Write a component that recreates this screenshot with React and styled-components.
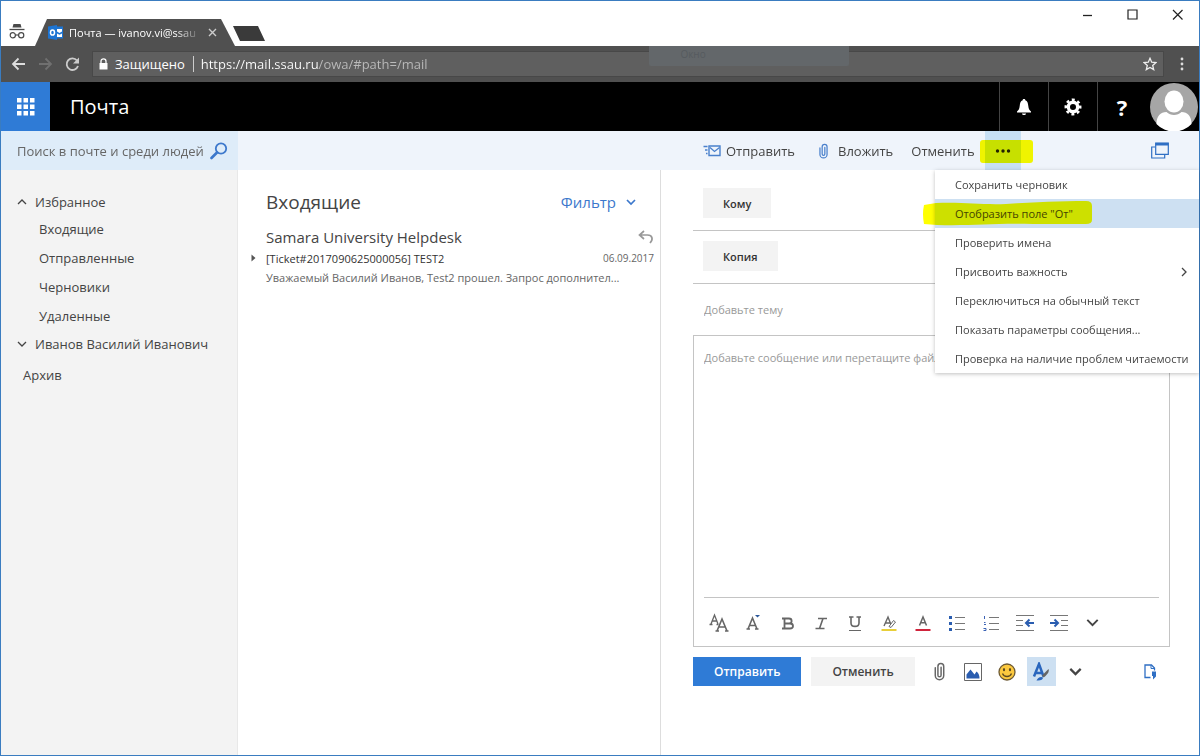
import React, { useState } from "react";
import styled, { createGlobalStyle, css } from "styled-components";

const folders = ["Входящие", "Отправленные", "Черновики", "Удаленные"];

const menuItems = [
  { label: "Сохранить черновик" },
  { label: 'Отобразить поле "От"', marked: true },
  { label: "Проверить имена" },
  { label: "Присвоить важность", submenu: true },
  { label: "Переключиться на обычный текст" },
  { label: "Показать параметры сообщения..." },
  { label: "Проверка на наличие проблем читаемости" },
];

const Icon = ({ w = 16, h = 16, box, children, ...rest }) => (
  <svg width={w} height={h} viewBox={box || `0 0 ${w} ${h}`} fill="none" aria-hidden="true" {...rest}>
    {children}
  </svg>
);

const Chevron = ({ dir = "down", size = 10, width = 1.3 }) => {
  const paths = { down: "M1 3l4 4 4-4", up: "M1 7l4-4 4 4", right: "M3 1l4 4-4 4" };
  return (
    <Icon w={size} h={size} box="0 0 10 10">
      <path d={paths[dir]} stroke="currentColor" strokeWidth={width} />
    </Icon>
  );
};

const Clip = ({ color, w, h }) => (
  <Icon w={w} h={h} box="0 0 10 18">
    <path
      d="M6.500 5v7.500a1.500 1.500 0 0 1-3 0V4.200a2.700 2.700 0 0 1 5.500 0v8.600a4 4 0 0 1-8 0V5.500"
      stroke={color}
      strokeWidth="1.400"
      strokeLinecap="round"
    />
  </Icon>
);

const formatTools = [
  {
    name: "Шрифт",
    icon: (
      <Icon w={20} h={20}>
        <path d="M2 11L5.5 2 9 11M3.5 8h4M0.5 11.5h3M7.5 11.5h2" stroke="#666" strokeWidth="1.3" />
        <path d="M8 18L13 6l5 12M9.8 14h6.500M6.500 18h3.500M16 18h3.500" stroke="#666" strokeWidth="1.6" />
      </Icon>
    ),
  },
  {
    name: "Размер шрифта",
    icon: (
      <Icon w={20} h={20}>
        <path d="M5 16L9.500 5 14 16M6.500 12.500h6M3.500 16h3.500M12 16h3.500" stroke="#666" strokeWidth="1.6" />
        <path d="M12 2h5l-2.500 2.500z" fill="#2b579a" />
      </Icon>
    ),
  },
  {
    name: "Полужирный",
    icon: (
      <Icon w={20} h={20}>
        <path
          d="M5 5.500h7c3.500 0 3.500 5 0 5H8M5 15.500h8c4 0 4-5 0-5M7.500 5.500v10"
          stroke="#666"
          strokeWidth="1.8"
        />
      </Icon>
    ),
  },
  {
    name: "Курсив",
    icon: (
      <Icon w={20} h={20}>
        <path d="M7 5.500h9M4.500 15.500h9M12 5.500l-3.500 10" stroke="#666" strokeWidth="1.6" />
      </Icon>
    ),
  },
  {
    name: "Подчеркнутый",
    icon: (
      <Icon w={20} h={20}>
        <path d="M4 4h4.500M11.500 4H16M6 4v6c0 4.500 8 4.500 8 0V4" stroke="#666" strokeWidth="1.6" />
        <path d="M4 17.500h12" stroke="#666" />
      </Icon>
    ),
  },
  {
    name: "Выделение",
    icon: (
      <Icon w={20} h={20}>
        <path d="M5 13L9 4l3.500 9M6.200 10h5.500" stroke="#666" strokeWidth="1.4" />
        <path d="M10 13.500l4.500-6 2 1.500-4.500 5.500z" fill="#fff" stroke="#666" />
        <path d="M2.500 17h15" stroke="#e8cf3a" strokeWidth="2" />
      </Icon>
    ),
  },
  {
    name: "Цвет шрифта",
    icon: (
      <Icon w={20} h={20}>
        <path d="M6.500 12.500L10 4l3.500 8.500M7.700 9.700h4.600" stroke="#666" strokeWidth="1.5" />
        <path d="M2.500 17h15" stroke="#d0243c" strokeWidth="2" />
      </Icon>
    ),
  },
  {
    name: "Маркеры",
    icon: (
      <Icon w={20} h={20}>
        <path d="M2 3h3v3H2zM2 9h3v3H2zM2 15h3v3H2z" fill="#2a5db0" />
        <path d="M8 4.500h10M8 10.500h10M8 16.500h10" stroke="#777" />
      </Icon>
    ),
  },
  {
    name: "Нумерация",
    icon: (
      <Icon w={20} h={20}>
        <path d="M3.500 3v3M3 3.500h1M3 9.500h1.500M3 11.500h2M2.500 15.500h2.500v2H2.500" stroke="#3b62b5" />
        <path d="M8 4.500h10M8 10.500h10M8 16.500h10" stroke="#777" />
      </Icon>
    ),
  },
  {
    name: "Уменьшить отступ",
    icon: (
      <Icon w={20} h={20}>
        <path d="M1 2.500h18M1 7.500h7M1 12.500h7M1 17.500h18" stroke="#777" />
        <path d="M19 10h-8M14.500 6.500L11 10l3.500 3.500" stroke="#2a5db0" strokeWidth="2" />
      </Icon>
    ),
  },
  {
    name: "Увеличить отступ",
    icon: (
      <Icon w={20} h={20}>
        <path d="M1 2.500h18M12 7.500h7M12 12.500h7M1 17.500h18" stroke="#777" />
        <path d="M1 10h8M5.500 6.500L9 10l-3.500 3.500" stroke="#2a5db0" strokeWidth="2" />
      </Icon>
    ),
  },
  { name: "Еще форматирование", icon: <Chevron size={13} width={1.5} /> },
];

const attachTools = [
  { name: "Вложить файл", icon: <Clip color="#666" w={11} h={19} /> },
  {
    name: "Вставить рисунок",
    icon: (
      <Icon w={18} h={18}>
        <path d="M0.500 0.500h17v17H0.500z" stroke="#666" fill="#fff" />
        <path d="M2.500 15.500v-4l4-5 4 5 2-3c2.500 2 3 4 3 7z" fill="#2a5db0" />
      </Icon>
    ),
  },
  {
    name: "Смайлик",
    icon: (
      <Icon w={18} h={18}>
        <circle cx="9" cy="9" r="8" fill="#fcc93f" stroke="#6d5a34" strokeWidth="1.300" />
        <ellipse cx="6" cy="6.700" rx="1.100" ry="1.600" fill="#5d4a20" />
        <ellipse cx="12" cy="6.700" rx="1.100" ry="1.600" fill="#5d4a20" />
        <path d="M4.500 10.500c1.500 4 7.500 4 9 0" stroke="#5d4a20" strokeWidth="1.300" />
      </Icon>
    ),
  },
  {
    name: "Форматирование",
    active: true,
    icon: (
      <Icon w={20} h={20}>
        <path d="M3 14.500L8 2l4.500 12.500M4.500 11h7" stroke="#2a66bd" strokeWidth="2.500" />
        <path d="M11 13.500L17.500 7c1.500 2.500-2 6.500-5 8.500z" fill="#666" />
        <path d="M5.500 18.500c1-2.500 4-4.500 6.500-3 0 2-2.500 3.500-6.500 3z" fill="#2a66bd" />
      </Icon>
    ),
  },
  { name: "Дополнительно", icon: <Chevron size={13} width={1.700} /> },
];

const App = () => {
  const [subject, setSubject] = useState("");
  const [message, setMessage] = useState("");

  return (
    <Window>
      <GlobalStyle />
      <TabStrip>
        <Incognito>
          <Icon w={16} h={17}>
            <path d="M4.500 1h7l1 3.500h-9z" fill="#4a4a4a" />
            <path d="M0.500 6.500h15" stroke="#4a4a4a" strokeWidth="1.300" />
            <circle cx="3.800" cy="12.300" r="2.600" stroke="#4a4a4a" strokeWidth="1.200" />
            <circle cx="12.200" cy="12.300" r="2.600" stroke="#4a4a4a" strokeWidth="1.200" />
            <path d="M6.400 12h3.200" stroke="#4a4a4a" strokeWidth="1.200" />
          </Icon>
        </Incognito>
        <Tab>
          <Icon w={15} h={15}>
            <path d="M0 1.500L9 0v15L0 13.500z" fill="#1d74d2" />
            <path d="M9 1.500h6v12H9z" fill="#1d74d2" />
            <ellipse cx="4.500" cy="7.500" rx="2" ry="2.600" stroke="#fff" strokeWidth="1.500" />
            <path d="M9 4h5v2.500L11.500 8 9 6.500zM9 8.500l2.500 1.300L14 8.500v3.500H9z" fill="#fff" />
          </Icon>
          <TabTitle>Почта — ivanov.vi@ssau</TabTitle>
          <PlainButton aria-label="Закрыть вкладку">
            <Icon w={9} h={9}>
              <path d="M1 1l7 7M8 1L1 8" stroke="#ccc" strokeWidth="1.400" />
            </Icon>
          </PlainButton>
        </Tab>
        <NewTab aria-label="Новая вкладка" />
        <WindowButtons>
          <PlainButton aria-label="Свернуть">
            <Icon w={11} h={11}><path d="M1 6.500h9" stroke="#222" strokeWidth="1.300" /></Icon>
          </PlainButton>
          <PlainButton aria-label="Развернуть">
            <Icon w={11} h={11}><path d="M1 1h9v9H1z" stroke="#222" strokeWidth="1.200" /></Icon>
          </PlainButton>
          <PlainButton aria-label="Закрыть">
            <Icon w={11} h={11}><path d="M1 1l9.500 9.500M10.500 1L1 10.500" stroke="#222" strokeWidth="1.200" /></Icon>
          </PlainButton>
        </WindowButtons>
      </TabStrip>

      <AddressRow>
        <PlainButton aria-label="Назад">
          <Icon w={15} h={14}><path d="M14 7H2M7.500 1.500L2 7l5.500 5.500" stroke="#ddd" strokeWidth="1.800" /></Icon>
        </PlainButton>
        <PlainButton aria-label="Вперед">
          <Icon w={15} h={14}><path d="M1 7h12M7.500 1.500L13 7l-5.500 5.500" stroke="#707070" strokeWidth="1.800" /></Icon>
        </PlainButton>
        <PlainButton aria-label="Обновить">
          <Icon w={15} h={15}>
            <path d="M12 3.500A5.800 5.800 0 1 0 13 9" stroke="#ccc" strokeWidth="1.800" />
            <path d="M14 0.500V6.500H8z" fill="#ccc" />
          </Icon>
        </PlainButton>
        <AddressBar>
          <Icon w={9} h={12}>
            <path d="M0.500 5h8v6.500h-8z" fill="#fff" />
            <path d="M2 5.500V3.300a2.500 2.500 0 0 1 5 0V5.500" stroke="#fff" strokeWidth="1.300" />
          </Icon>
          <Secure>Защищено</Secure>
          <Address aria-label="Адрес" defaultValue="https://mail.ssau.ru/owa/#path=/mail" />
          <Ghost>Окно</Ghost>
          <PlainButton aria-label="В закладки">
            <Icon w={14} h={14}>
              <path d="M7 1.300l1.700 3.900 4.200.4-3.200 2.800 1 4.200L7 10.400l-3.700 2.200 1-4.200L1.100 5.600l4.200-.4z" stroke="#eee" strokeWidth="1.300" />
            </Icon>
          </PlainButton>
        </AddressBar>
        <PlainButton aria-label="Меню">
          <Icon w={4} h={14}>
            <circle cx="2" cy="2" r="1.400" fill="#ddd" />
            <circle cx="2" cy="7" r="1.400" fill="#ddd" />
            <circle cx="2" cy="12" r="1.400" fill="#ddd" />
          </Icon>
        </PlainButton>
      </AddressRow>

      <Header>
        <Launcher aria-label="Приложения">
          <Icon w={18} h={18}>
            {[0, 6.5, 13].map((y) =>
              [0, 6.5, 13].map((x) => <rect key={`${x}-${y}`} x={x} y={y} width="4.500" height="4.500" fill="#fff" />)
            )}
          </Icon>
        </Launcher>
        <AppName>Почта</AppName>
        <HeaderButton aria-label="Уведомления">
          <Icon w={16} h={18}>
            <path d="M8 1c1 0 1.300.6 1.300 1.200C11.500 3 12 5 12.300 8c.3 3 1.200 4.300 2.700 5.500v1H1v-1C2.500 12.300 3.400 11 3.700 8 4 5 4.500 3 6.700 2.200 6.700 1.600 7 1 8 1z" fill="#fff" />
            <path d="M6 15.500h4c0 2-4 2-4 0z" fill="#fff" />
          </Icon>
        </HeaderButton>
        <HeaderButton aria-label="Параметры">
          <Icon w={18} h={18}>
            <circle cx="9" cy="9" r="4.700" stroke="#fff" strokeWidth="3.400" />
            <circle cx="9" cy="9" r="7.200" stroke="#fff" strokeWidth="2.600" strokeDasharray="2.850 2.805" transform="rotate(-11 9 9)" />
          </Icon>
        </HeaderButton>
        <HeaderButton aria-label="Справка">?</HeaderButton>
        <Avatar aria-label="Учетная запись">
          <Icon w={48} h={48}>
            <circle cx="24" cy="24" r="24" fill="#a6a6a6" />
            <ellipse cx="24" cy="18.500" rx="9.500" ry="11" fill="#fff" />
            <path d="M6.500 41c0-8 4-12 10-12 4 4 11 4 15 0 6 0 10 4 10 12a24 24 0 0 1-35 0z" fill="#fff" />
          </Icon>
        </Avatar>
      </Header>

      <CommandBar>
        <Search>
          <SearchInput aria-label="Поиск" placeholder="Поиск в почте и среди людей" />
          <PlainButton aria-label="Искать">
            <Icon w={18} h={18}>
              <circle cx="11" cy="6.500" r="5.200" stroke="#3c78cc" strokeWidth="1.800" />
              <path d="M7 10.500L1.500 16" stroke="#3c78cc" strokeWidth="2.600" strokeLinecap="round" />
            </Icon>
          </PlainButton>
        </Search>
        <Commands>
          <Command>
            <Icon w={18} h={12}>
              <path d="M6 1h11v9.500H6z" stroke="#4a80cc" strokeWidth="1.400" />
              <path d="M7 2.500l4.500 4 5-4" stroke="#4a80cc" strokeWidth="1.300" />
              <path d="M0.500 1.500h4M2 5h2.500M3 8.500h1.500" stroke="#4a80cc" strokeWidth="1.300" />
            </Icon>
            Отправить
          </Command>
          <Command $spaced>
            <Clip color="#4a80cc" w={9} h={16} />
            Вложить
          </Command>
          <Command>Отменить</Command>
          <More aria-label="Другие команды">
            <Icon w={16} h={4}>
              <circle cx="2.500" cy="2" r="1.700" fill="#222" />
              <circle cx="8" cy="2" r="1.700" fill="#222" />
              <circle cx="13.500" cy="2" r="1.700" fill="#222" />
            </Icon>
            <MoreMark />
          </More>
          <PopOut aria-label="Открыть в отдельном окне">
            <Icon w={18} h={17}>
              <path d="M4.700 1h12.600v11.300H4.700z" stroke="#2f6fc4" strokeWidth="1.200" />
              <path d="M4.500 2.200h13" stroke="#2f6fc4" strokeWidth="2.600" />
              <path d="M4 5H0.700v11h13V13" stroke="#2f6fc4" strokeWidth="1.200" />
            </Icon>
          </PopOut>
        </Commands>
        <Menu>
          {menuItems.map(({ label, marked, submenu }) => (
            <MenuItem key={label} $active={marked}>
              <span>{label}</span>
              {submenu && <Chevron dir="right" />}
              {marked && (
                <Mark>
                  <Icon w="100%" h="100%" box="0 0 170 26" preserveAspectRatio="none">
                    <path d="M1 4l12-2c30-1 45 2 70 1 30-2 55-3 80-3q6 0 6 5v14q0 4-6 4H110c-40-1-60 2-96 1L1 23Q-1 13 1 4z" fill="#ff0" />
                  </Icon>
                </Mark>
              )}
            </MenuItem>
          ))}
        </Menu>
      </CommandBar>

      <Body>
        <Sidebar>
          <Group><Chevron dir="up" />Избранное</Group>
          <FolderList>
            {folders.map((name) => (
              <li key={name}><Folder href="#">{name}</Folder></li>
            ))}
          </FolderList>
          <Group><Chevron />Иванов Василий Иванович</Group>
          <Archive href="#">Архив</Archive>
        </Sidebar>

        <MailList>
          <ListHead>
            <ListTitle>Входящие</ListTitle>
            <Filter>Фильтр <Chevron width={1.7} /></Filter>
          </ListHead>
          <Mail>
            <Expand aria-label="Развернуть беседу">
              <Icon w={5} h={8}><path d="M0.500 0.500v7l4-3.500z" fill="#555" /></Icon>
            </Expand>
            <Sender>
              <span>Samara University Helpdesk</span>
              <Icon w={16} h={14}>
                <path d="M6 1L1.500 5 6 9M2 5h7.500c5 0 6 4.500 2.500 8" stroke="#999" strokeWidth="1.700" />
              </Icon>
            </Sender>
            <MailSubject>
              <span>[Ticket#2017090625000056] TEST2</span>
              <MailDate>06.09.2017</MailDate>
            </MailSubject>
            <Preview>Уважаемый Василий Иванов, Test2 прошел. Запрос дополнител...</Preview>
          </Mail>
        </MailList>

        <Compose>
          <Recipient><FieldButton>Кому</FieldButton></Recipient>
          <Recipient><FieldButton>Копия</FieldButton></Recipient>
          <Subject
            aria-label="Тема"
            placeholder="Добавьте тему"
            value={subject}
            onChange={(e) => setSubject(e.target.value)}
          />
          <Editor>
            <Message
              aria-label="Сообщение"
              placeholder="Добавьте сообщение или перетащите файл"
              value={message}
              onChange={(e) => setMessage(e.target.value)}
            />
            <FormatBar>
              {formatTools.map(({ name, icon }) => (
                <Tool key={name} aria-label={name}>{icon}</Tool>
              ))}
            </FormatBar>
          </Editor>
          <Actions>
            <ActionButton $primary>Отправить</ActionButton>
            <ActionButton>Отменить</ActionButton>
            <AttachBar>
              {attachTools.map(({ name, icon, active }) => (
                <Tool key={name} aria-label={name} $active={active}>{icon}</Tool>
              ))}
            </AttachBar>
            <AddIn aria-label="Надстройки">
              <Icon w={13} h={16}>
                <path d="M6.500 13.500H1V1h6.500l3 3v2.500" stroke="#2f6fc4" strokeWidth="1.300" />
                <path d="M7 1v3.500h3.500" stroke="#2f6fc4" />
                <path d="M8 7.500h4v5L9 15.500V12H8z" fill="#2f6fc4" />
              </Icon>
            </AddIn>
          </Actions>
        </Compose>
      </Body>
    </Window>
  );
};

export default App;

const GlobalStyle = createGlobalStyle`
  * {
    box-sizing: border-box;
  }
  body {
    margin: 0;
    font-family: "Open Sans", "Noto Sans", sans-serif;
    font-size: 13px;
    color: #444;
  }
  button, input, textarea {
    font: inherit;
    color: inherit;
  }
  svg {
    display: block;
    flex: none;
  }
`

const Window = styled.div`
  display: flex;
  flex-direction: column;
  min-height: 100vh;
  border: 1px solid #3a7cc0;
  background: #fff;
`
const PlainButton = styled.button`
  display: flex;
  align-items: center;
  justify-content: center;
  padding: 0;
  border: 0;
  background: none;
`

/* browser frame */
const TabStrip = styled.div`
  display: flex;
  align-items: flex-end;
  height: 45px;
`
const Incognito = styled.div`
  padding: 0 0 6px 8px;
`
const Tab = styled.div`
  display: flex;
  align-items: center;
  gap: 6px;
  width: 200px;
  height: 27px;
  margin-left: 10px;
  padding: 0 18px 0 13px;
  background: #505050;
  color: #fff;
  clip-path: polygon(12px 0, 186px 0, 100% 100%, 0 100%);
`
const TabTitle = styled.span`
  flex: 1;
  white-space: nowrap;
  font-size: 11px;
  mask-image: linear-gradient(to right, #000 80%, transparent);
`
const NewTab = styled.button`
  width: 32px;
  height: 15px;
  margin: 0 0 5px -2px;
  padding: 0;
  border: 0;
  background: #3a3a3a;
  clip-path: polygon(0 0, 25px 0, 100% 100%, 7px 100%);
`
const WindowButtons = styled.div`
  display: flex;
  gap: 34px;
  align-self: flex-start;
  margin-left: auto;
  padding: 8px 16px 0 0;
`
const AddressRow = styled.div`
  display: flex;
  align-items: center;
  gap: 12px;
  height: 36px;
  padding: 0 15px 0 10px;
  background: #505050;
`
const AddressBar = styled.div`
  position: relative;
  display: flex;
  flex: 1;
  align-items: center;
  gap: 7px;
  height: 26px;
  margin-right: 4px;
  padding: 0 6px;
  border: 1px solid #484848;
  background: #5f5f5f;
  color: #fff;
`
const Secure = styled.span`
  padding-right: 8px;
  border-right: 1px solid #ccc;
  line-height: 16px;
`
const Address = styled.input`
  flex: 1;
  min-width: 0;
  padding: 0;
  border: 0;
  outline: 0;
  background: linear-gradient(to right, #fff 118px, #bbb 118px);
  background-clip: text;
  color: transparent;
`
const Ghost = styled.div`
  position: absolute;
  top: -6px;
  left: 52%;
  width: 200px;
  height: 20px;
  padding-left: 31px;
  border-radius: 0 0 2px 2px;
  background: #63676a;
  color: #565b5f;
  font-size: 10px;
  line-height: 16px;
`

/* outlook header */
const Header = styled.header`
  display: flex;
  height: 49px;
  background: #000;
  color: #fff;
`
const Launcher = styled(PlainButton)`
  width: 49px;
  background: #2f7bd6;
`
const AppName = styled.h1`
  flex: 1;
  margin: 0;
  padding-left: 20px;
  font-size: 20px;
  font-weight: 400;
  line-height: 49px;
`
const HeaderButton = styled(PlainButton)`
  width: 49px;
  border-left: 1px solid #444;
  font-size: 22px;
  font-weight: 700;
`
const Avatar = styled(PlainButton)`
  margin-left: 4px;
  padding-right: 1px;
`

const columns = css`
  display: grid;
  grid-template-columns: 237px minmax(0, 422fr) minmax(0, 539fr);
`
const CommandBar = styled.div`
  ${columns}
  position: relative;
  z-index: 1;
  height: 39px;
  background: #eff4fb;
`
const Search = styled.div`
  display: flex;
  align-items: center;
  padding: 0 10px 0 16px;
  background: #deecf9;
`
const SearchInput = styled.input`
  flex: 1;
  min-width: 0;
  padding: 0;
  border: 0;
  outline: 0;
  background: none;
  &::placeholder {
    color: #666;
    opacity: 1;
  }
`
const Commands = styled.div`
  grid-column: 3;
  display: flex;
  padding-left: 43px;
`
const Command = styled(PlainButton)`
  gap: ${({ $spaced }) => ($spaced ? "10px" : "5px")};
  margin-right: 18px;
  padding-left: ${({ $spaced }) => ($spaced ? "6px" : "0")};
`
const More = styled(PlainButton)`
  position: relative;
  width: 36px;
  margin-left: -8px;
  background: #c7e0f4;
`
const MoreMark = styled.span`
  position: absolute;
  top: 9px;
  left: -5px;
  width: 53px;
  height: 23px;
  border-radius: 3px;
  background: #ff0;
  mix-blend-mode: multiply;
`
const PopOut = styled(PlainButton)`
  margin-left: auto;
  padding-right: 30px;
`
const Menu = styled.div`
  position: absolute;
  top: 100%;
  right: 0;
  width: 264px;
  background: #fff;
  box-shadow: 0 1px 4px rgba(0, 0, 0, 0.25);
`
const MenuItem = styled(PlainButton)`
  position: relative;
  justify-content: space-between;
  width: 100%;
  height: 29px;
  padding: 0 10px 0 20px;
  background: ${({ $active }) => ($active ? "#cde0f2" : "none")};
  font-size: 11px;
  white-space: nowrap;
`
const Mark = styled.span`
  position: absolute;
  top: 2px;
  left: -12px;
  width: 170px;
  height: 26px;
  mix-blend-mode: multiply;
`

const Body = styled.div`
  ${columns}
  flex: 1;
`
const Sidebar = styled.nav`
  padding-top: 19px;
  border-right: 1px solid #e8e8e8;
  background: #f3f3f3;
`
const Group = styled(PlainButton)`
  gap: 8px;
  height: 26px;
  padding-left: 16px;
`
const FolderList = styled.ul`
  margin: 0;
  padding: 0;
  list-style: none;
`
const Folder = styled.a`
  display: block;
  padding-left: 38px;
  color: inherit;
  line-height: 29px;
  text-decoration: none;
`
const Archive = styled(Folder)`
  padding: 4px 0 0 22px;
`

const MailList = styled.section`
  padding: 15px 6px 0 28px;
`
const ListHead = styled.div`
  display: flex;
  align-items: center;
  justify-content: space-between;
  height: 34px;
  padding-right: 18px;
`
const ListTitle = styled.h2`
  margin: 0;
  font-size: 19px;
  font-weight: 400;
`
const Filter = styled(PlainButton)`
  gap: 10px;
  color: #3c78cc;
  font-size: 15px;
`
const Mail = styled.article`
  position: relative;
  padding-top: 6px;
`
const Expand = styled(PlainButton)`
  position: absolute;
  top: 35px;
  left: -15px;
`
const Sender = styled.div`
  display: flex;
  align-items: center;
  justify-content: space-between;
  font-size: 15px;
  line-height: 24px;
`
const MailSubject = styled.div`
  display: flex;
  justify-content: space-between;
  color: #333;
  font-size: 11px;
  line-height: 19px;
`
const MailDate = styled.span`
  color: #666;
  font-size: 10px;
`
const Preview = styled.div`
  color: #666;
  font-size: 11px;
  line-height: 20px;
  white-space: nowrap;
`

const Compose = styled.section`
  display: flex;
  flex-direction: column;
  padding: 8px 29px 69px 32px;
  border-left: 1px solid #ddd;
`
const Recipient = styled.div`
  padding: 10px 10px 12px;
  border-bottom: 1px solid #c4c4c4;
`
const FieldButton = styled.button`
  display: block;
  height: 30px;
  padding: 0 20px;
  border: 0;
  background: #f3f3f3;
  color: #333;
  font-size: 11px;
  font-weight: 600;
`
const Subject = styled.input`
  height: 51px;
  padding: 0 11px;
  border: 0;
  outline: 0;
  background: none;
  font-size: 11px;
  &::placeholder {
    color: #999;
    opacity: 1;
  }
`
const Editor = styled.div`
  display: flex;
  flex: 1;
  flex-direction: column;
  padding: 0 10px;
  border: 1px solid #c4c4c4;
`
const Message = styled.textarea`
  flex: 1;
  padding: 14px 0;
  border: 0;
  outline: 0;
  background: none;
  font-size: 11px;
  resize: none;
  &::placeholder {
    color: #999;
    opacity: 1;
  }
`
const FormatBar = styled.div`
  display: flex;
  gap: 5px;
  padding: 10px 0 9px;
  border-top: 1px solid #c4c4c4;
`
const Tool = styled(PlainButton)`
  width: 29px;
  height: 29px;
  background: ${({ $active }) => ($active ? "#cde0f2" : "none")};
`
const Actions = styled.div`
  display: flex;
  align-items: center;
  gap: 10px;
  padding-top: 10px;
`
const ActionButton = styled.button`
  height: 29px;
  padding: 0 21px;
  border: 0;
  background: ${({ $primary }) => ($primary ? "#2f7bd6" : "#f3f3f3")};
  color: ${({ $primary }) => ($primary ? "#fff" : "#444")};
  font-size: 12px;
  font-weight: 600;
`
const AttachBar = styled.div`
  display: flex;
  gap: 5px;
`
const AddIn = styled(PlainButton)`
  margin: 0 13px 0 auto;
`
